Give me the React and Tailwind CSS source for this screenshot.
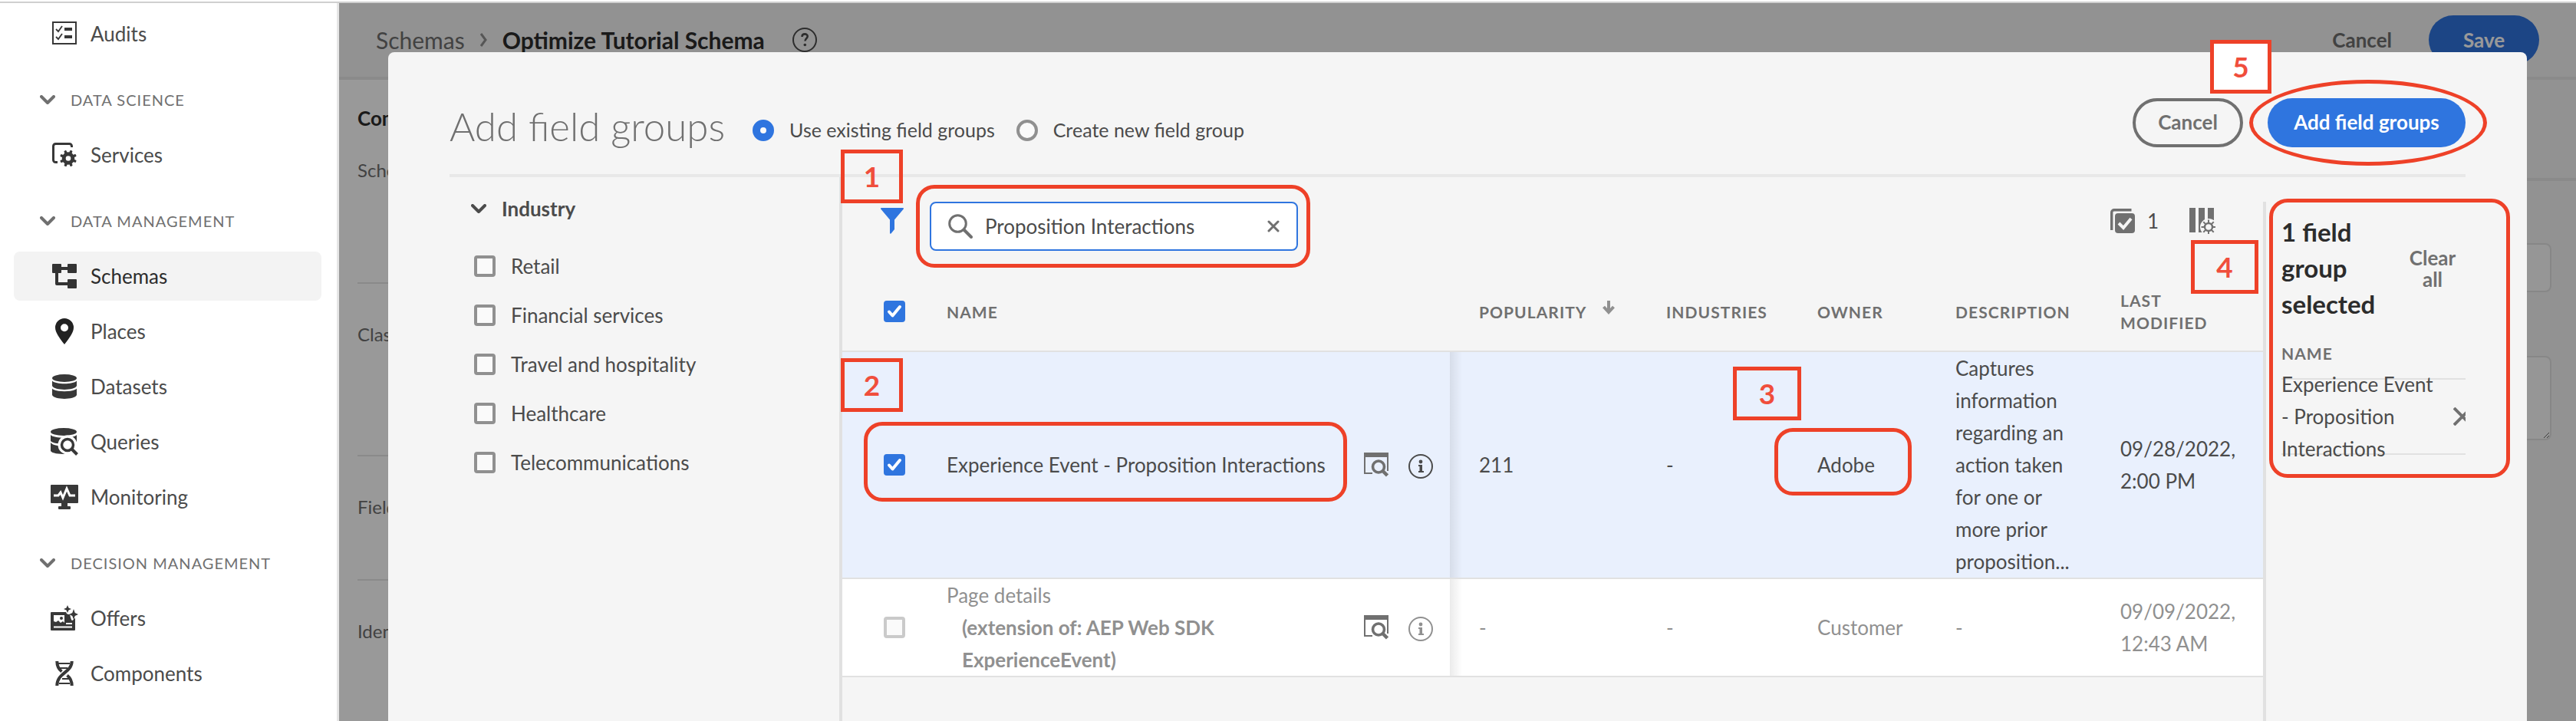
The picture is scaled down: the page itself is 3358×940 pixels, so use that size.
import React from "react";

const GEAR_TEETH = [0, 45, 90, 135, 180, 225, 270, 315];

function AuditsIcon() {
  return (
    <svg width="32" height="32" viewBox="0 0 32 32" fill="none" stroke="#383838" aria-hidden="true">
      <rect x="1" y="1" width="30" height="28" strokeWidth="2" />
      <path d="M5 10l3 3 5-7M5 20l3 3 5-7" strokeWidth="1.8" />
      <path d="M16 10h10M16 20h10" strokeWidth="4" />
    </svg>
  );
}

function ServicesIcon() {
  return (
    <svg width="32" height="32" viewBox="0 0 32 32" aria-hidden="true">
      <path
        d="M7 25.5H4.500A3 3 0 0 1 1.500 22.500V4.500A3 3 0 0 1 4.500 1.500H22.500A3 3 0 0 1 25.500 4.500V6"
        fill="none"
        stroke="#383838"
        strokeWidth="3"
      />
      <g fill="#383838">
        {GEAR_TEETH.map((angle) => (
          <rect key={angle} x="19.300" y="9.500" width="3.400" height="5" rx="1" transform={`rotate(${angle + 22} 21 20.500)`} />
        ))}
      </g>
      <circle cx="21" cy="20.500" r="5.800" fill="none" stroke="#383838" strokeWidth="5" />
    </svg>
  );
}

function SchemasIcon() {
  return (
    <svg width="32" height="32" viewBox="0 0 32 32" fill="#333333" aria-hidden="true">
      <rect width="12" height="12" rx="1" />
      <rect x="20" width="12" height="12" rx="1" />
      <rect x="20" y="20" width="12" height="12" rx="1" />
      <path d="M12 6h8M6 12v14h14" fill="none" stroke="#333333" strokeWidth="4" strokeLinejoin="round" />
    </svg>
  );
}

function PlacesIcon() {
  return (
    <svg width="32" height="34" viewBox="0 0 32 34" fill="#222222" aria-hidden="true">
      <path
        fillRule="evenodd"
        d="M16 0A12 12 0 0 0 4 12c0 6.500 5.500 13.500 12 22 6.500-8.500 12-15.500 12-22A12 12 0 0 0 16 0zm0 7.200a5 5 0 1 1 0 10 5 5 0 0 1 0-10z"
      />
    </svg>
  );
}

function DatasetsIcon() {
  return (
    <svg width="32" height="32" viewBox="0 0 32 32" fill="#383838" aria-hidden="true">
      <ellipse cx="16" cy="5" rx="16" ry="5" />
      <path d="M0 8.500C5 13.500 27 13.500 32 8.500V15C29 21.500 3 21.500 0 15z" />
      <path d="M0 18.500C4 23.500 28 23.500 32 18.500V27C29 33.500 3 33.500 0 27z" />
    </svg>
  );
}

function QueriesIcon() {
  return (
    <svg width="36" height="36" viewBox="0 0 36 36" fill="#383838" aria-hidden="true">
      <ellipse cx="17" cy="5" rx="17" ry="5" />
      <path d="M0 9C5 14 29 14 34 9V18C29 22 5 22 0 17z" />
      <path d="M0 19C3 23 12 24 20 23V34C10 34 2 33 0 30z" />
      <circle cx="22" cy="22" r="12.500" fill="#ffffff" />
      <path d="M24 24L36 36" stroke="#ffffff" strokeWidth="7" />
      <circle cx="22" cy="22" r="7.500" fill="#ffffff" stroke="#383838" strokeWidth="3.500" />
      <path d="M27.500 27.500L34.500 34.500" stroke="#383838" strokeWidth="4" />
    </svg>
  );
}

function MonitoringIcon() {
  return (
    <svg width="36" height="32" viewBox="0 0 36 32" fill="#383838" aria-hidden="true">
      <path d="M1 0h34a1 1 0 0 1 1 1v22a1 1 0 0 1-1 1H22v4h3a1 1 0 0 1 1 1v2a1 1 0 0 1-1 1H11a1 1 0 0 1-1-1v-2a1 1 0 0 1 1-1h3v-4H1a1 1 0 0 1-1-1V1a1 1 0 0 1 1-1z" />
      <path d="M4 14h6l3-4 3 7 5-12 4 9h7" fill="none" stroke="#ffffff" strokeWidth="3" />
    </svg>
  );
}

function OffersIcon() {
  return (
    <svg width="36" height="34" viewBox="0 0 36 34" fill="#383838" aria-hidden="true">
      <path d="M1 9h19c1 3 3 3 5 3 1 4 2 8 3 8 2 0 2-3 4-3v15a1 1 0 0 1-1 1H1a1 1 0 0 1-1-1V10a1 1 0 0 1 1-1z" />
      <path d="M4 13h14v10l-2-2-3 2-3-3-3 2-3-1z" fill="#ffffff" />
      <circle cx="14" cy="17" r="2" />
      <path d="M20 24h8M4 28.500h24" stroke="#ffffff" strokeWidth="2.200" />
      <path d="M22 0l1.500 3.500L27 5l-3.500 1.500L22 10l-1.500-3.500L17 5l3.500-1.500zM30 5l1.700 5L36 12l-4.300 2-1.700 5-1.700-5L24 12l4.300-2z" />
    </svg>
  );
}

function ComponentsIcon() {
  return (
    <svg width="32" height="32" viewBox="0 0 32 32" fill="none" stroke="#383838" aria-hidden="true">
      <path d="M25.700 0C25.700 15 6.300 15 6.300 32" strokeWidth="4" />
      <path d="M6.300 0C6.300 6 8 10 12.500 13.500M25.700 32C25.700 26 24 22 19.500 18.500" strokeWidth="4" />
      <path d="M8 3h15M9 9h11M13 23h10M9 29h14" strokeWidth="2" />
    </svg>
  );
}

function Chevron({ color }) {
  return (
    <svg width="20" height="12" viewBox="0 0 20 12" fill="none" stroke={color} strokeWidth="4" strokeLinecap="round" aria-hidden="true">
      <path d="M2 2l8 8 8-8" strokeLinejoin="round" />
    </svg>
  );
}

function FilterIcon() {
  return (
    <svg width="30" height="34" viewBox="0 0 30 34" fill="#2f75df" aria-hidden="true">
      <path d="M1 0h28a1 1 0 0 1 .800 1.600L18 15.500V28l-4.500 5.500a1 1 0 0 1-1.500-1V15.500L.200 1.600A1 1 0 0 1 1 0z" />
    </svg>
  );
}

function SearchIcon() {
  return (
    <svg width="32" height="32" viewBox="0 0 32 32" fill="none" stroke="#707070" strokeWidth="3" aria-hidden="true">
      <circle cx="12.500" cy="12.500" r="10.800" />
      <path d="M20.500 20.500L30 30" strokeWidth="4" strokeLinecap="round" />
    </svg>
  );
}

function PreviewIcon() {
  return (
    <svg width="32" height="32" viewBox="0 0 32 32" fill="none" stroke="#707070" aria-hidden="true">
      <path d="M0 3h32" strokeWidth="6" />
      <path d="M1 5v22h10M31 5v19" strokeWidth="2" />
      <circle cx="19" cy="18.500" r="7.500" strokeWidth="3.600" />
      <path d="M24.500 24l6 6" strokeWidth="4.500" />
    </svg>
  );
}

function InfoIcon({ color }) {
  return (
    <svg width="32" height="32" viewBox="0 0 32 32" fill={color} aria-hidden="true">
      <circle cx="16" cy="16" r="15" fill="none" stroke={color} strokeWidth="2" />
      <circle cx="16" cy="10" r="2.400" />
      <path d="M13 14h5v8h2v2h-7v-2h1.500v-6H13z" />
    </svg>
  );
}

function HelpIcon() {
  return (
    <svg width="32" height="32" viewBox="0 0 32 32" fill="none" stroke="#4b4b4b" aria-hidden="true">
      <circle cx="16" cy="16" r="15" strokeWidth="2" />
      <path d="M12.500 12c0-5 7.500-4.500 7.200-.500-.200 2.500-3.200 2.800-3.200 6" strokeWidth="2.600" />
      <circle cx="16.300" cy="22.500" r="1.800" fill="#4b4b4b" stroke="none" />
    </svg>
  );
}

function SelectedIcon() {
  return (
    <svg width="32" height="32" viewBox="0 0 32 32" aria-hidden="true">
      <path d="M1.700 28V5A3.300 3.300 0 0 1 5 1.700h22.500" fill="none" stroke="#707070" strokeWidth="3.400" />
      <rect x="6" y="6" width="26" height="26" rx="4" fill="#707070" />
      <path d="M11 19l6 6 10-12" fill="none" stroke="#f5f5f5" strokeWidth="4" />
    </svg>
  );
}

function ColumnsIcon() {
  return (
    <svg width="34" height="34" viewBox="0 0 34 34" fill="#707070" aria-hidden="true">
      <path d="M0 0h8v32H0zM12 0h8v32h-8zM24 0h8v16h-8z" />
      <circle cx="25" cy="25" r="11" fill="#f5f5f5" />
      {GEAR_TEETH.map((angle) => (
        <rect key={angle} x="24" y="15.500" width="2" height="4" transform={`rotate(${angle} 25 25)`} />
      ))}
      <circle cx="25" cy="25" r="5" fill="none" stroke="#707070" strokeWidth="2.400" />
    </svg>
  );
}

function Checkbox({ id, label, checked = false, muted = false }) {
  return (
    <span className="grid size-7 shrink-0">
      <input
        id={id}
        type="checkbox"
        aria-label={label}
        defaultChecked={checked}
        disabled={muted}
        className="peer col-start-1 row-start-1 size-7 appearance-none rounded border-4 border-[#909090] bg-[#fafafa] checked:border-[#2f75df] checked:bg-[#2f75df] disabled:border-[#cacaca]"
      />
      <svg
        viewBox="0 0 28 28"
        className="pointer-events-none col-start-1 row-start-1 hidden size-7 peer-checked:block"
        fill="none"
        stroke="#ffffff"
        strokeWidth="4"
        strokeLinecap="round"
        strokeLinejoin="round"
        aria-hidden="true"
      >
        <path d="M7 14.500l4.500 5L21 8" />
      </svg>
    </span>
  );
}

const NAV = [
  { items: [["Audits", AuditsIcon]] },
  { title: "DATA SCIENCE", items: [["Services", ServicesIcon]] },
  {
    title: "DATA MANAGEMENT",
    items: [
      ["Schemas", SchemasIcon],
      ["Places", PlacesIcon],
      ["Datasets", DatasetsIcon],
      ["Queries", QueriesIcon],
      ["Monitoring", MonitoringIcon],
    ],
  },
  {
    title: "DECISION MANAGEMENT",
    items: [
      ["Offers", OffersIcon],
      ["Components", ComponentsIcon],
    ],
  },
];

function Sidebar() {
  return (
    <nav aria-label="Main" className="flex w-[442px] shrink-0 flex-col gap-[22px] border-r-3 border-[#e6e6e6] bg-white pt-2 pr-5 pl-[18px]">
      {NAV.map((section) => (
        <section key={section.items[0][0]} className="flex flex-col gap-2">
          {section.title && (
            <button type="button" className="flex h-16 items-center gap-5 pl-[34px] text-[20px] tracking-wider text-[#707070]">
              <Chevron color="#707070" />
              {section.title}
            </button>
          )}
          {section.items.map(([label, Icon]) => (
            <a
              key={label}
              href={`#${label.toLowerCase()}`}
              className={
                label === "Schemas"
                  ? "flex h-16 items-center gap-4 rounded-lg bg-[#f3f3f3] pl-12 text-[26px] text-[#2c2c2c]"
                  : "flex h-16 items-center gap-4 rounded-lg pl-12 text-[26px] text-[#4b4b4b]"
              }
            >
              <span className="grid w-9 place-items-center">
                <Icon />
              </span>
              {label}
            </a>
          ))}
        </section>
      ))}
    </nav>
  );
}

function SchemaEditor() {
  return (
    <div className="flex h-full flex-col bg-[#f4f4f4]">
      <header className="flex h-[100px] shrink-0 items-start justify-between border-b-4 border-[#e6e6e6] pr-12 pl-12">
        <div className="flex h-[96px] items-center gap-5 text-[30px] text-[#6e6e6e]">
          <a href="#schemas">Schemas</a>
          <svg width="9" height="18" viewBox="0 0 9 18" fill="none" stroke="#909090" strokeWidth="3" aria-hidden="true">
            <path d="M1 1l6 8-6 8" />
          </svg>
          <h1 className="font-bold text-[#2c2c2c]">Optimize Tutorial Schema</h1>
          <span className="pl-4">
            <HelpIcon />
          </span>
        </div>
        <div className="flex items-center gap-12 pt-4 text-[26px] font-bold">
          <button type="button" className="text-[#6e6e6e]">
            Cancel
          </button>
          <button type="button" className="h-16 w-36 rounded-full bg-[#3074de] text-white">
            Save
          </button>
        </div>
      </header>
      <div className="flex grow">
        <aside className="w-16 shrink-0 overflow-hidden bg-white pl-6 text-[24px] whitespace-nowrap text-[#6e6e6e]">
          <h2 className="pt-8 text-[26px] leading-9 font-bold text-[#2c2c2c]">Composition</h2>
          <p className="mt-8 h-[166px] border-b-2 border-[#e6e6e6] leading-9">Schema</p>
          <p className="h-[225px] border-b-2 border-[#e6e6e6] pt-12 leading-9">Class</p>
          <p className="h-[162px] border-b-2 border-[#e6e6e6] pt-12 leading-9">Field groups</p>
          <p className="pt-12 leading-9">Identities</p>
        </aside>
        <div className="min-w-0 grow">
          <div className="h-[132px] border-b-4 border-[#e6e6e6]" />
          <form className="flex flex-col items-end gap-[83px] pt-[81px] pr-8">
            <input aria-label="Display name" className="h-16 w-[560px] rounded-lg border-2 border-[#e1e1e1] bg-[#fafafa]" />
            <textarea aria-label="Description" className="h-[110px] w-[560px] rounded-lg border-2 border-[#e1e1e1] bg-[#fafafa]" />
          </form>
        </div>
      </div>
    </div>
  );
}

function Badge({ children, className }) {
  return (
    <span className={`pointer-events-none absolute z-10 grid h-[70px] place-items-center border-5 border-[#ee4128] text-[37px] font-bold text-[#f04e3c] ${className}`}>
      {children}
    </span>
  );
}

function Ring({ className }) {
  return <span className={`pointer-events-none absolute z-10 border-5 border-[#ee4128] ${className}`} />;
}

const INDUSTRIES = ["Retail", "Financial services", "Travel and hospitality", "Healthcare", "Telecommunications"];

function IndustryFilter() {
  return (
    <aside className="flex w-[508px] shrink-0 flex-col pt-4 pl-7 text-[26px] text-[#4b4b4b]">
      <button type="button" className="flex h-[50px] items-center gap-5 font-bold">
        <Chevron color="#4b4b4b" />
        Industry
      </button>
      <ul className="flex flex-col gap-7 pt-8 pl-1">
        {INDUSTRIES.map((name) => (
          <li key={name} className="flex h-9 items-center gap-5">
            <Checkbox id={`industry-${name}`} />
            <label htmlFor={`industry-${name}`}>{name}</label>
          </li>
        ))}
      </ul>
    </aside>
  );
}

const ROWS = [
  {
    name: "Experience Event - Proposition Interactions",
    selected: true,
    popularity: "211",
    industries: "-",
    owner: "Adobe",
    description: "Captures information regarding an action taken for one or more prior proposition...",
    modified: "09/28/2022, 2:00 PM",
  },
  {
    name: "Page details",
    extension: "(extension of: AEP Web SDK ExperienceEvent)",
    popularity: "-",
    industries: "-",
    owner: "Customer",
    description: "-",
    modified: "09/09/2022, 12:43 AM",
  },
];

function FieldGroupTable() {
  return (
    <table className="w-full table-fixed text-left text-[26px] leading-[42px]">
      <colgroup>
        <col className="w-[136px]" />
        <col />
        <col className="w-[112px]" />
        <col className="w-[244px]" />
        <col className="w-[197px]" />
        <col className="w-[180px]" />
        <col className="w-[215px]" />
        <col className="w-[224px]" />
      </colgroup>
      <thead>
        <tr className="h-[131px] border-b-2 border-[#e1e1e1] text-[21px] leading-[29px] tracking-wider text-[#707070]">
          <th className="pt-8 pb-1 pl-[54px]">
            <Checkbox label="Select all" checked />
          </th>
          <th colSpan={2} className="pt-8 pb-1">
            NAME
          </th>
          <th className="pt-8 pb-1 pl-[38px]">
            <span className="flex items-center gap-5">
              POPULARITY
              <svg width="16" height="28" viewBox="0 0 16 28" fill="none" stroke="#909090" strokeWidth="4" aria-hidden="true">
                <path d="M8 0v15M1.500 8L8 15l6.500-7" />
              </svg>
            </span>
          </th>
          <th className="pt-8 pb-1 pl-[38px]">INDUSTRIES</th>
          <th className="pt-8 pb-1 pl-[38px]">OWNER</th>
          <th className="pt-8 pb-1 pl-[38px]">DESCRIPTION</th>
          <th className="pt-8 pr-20 pb-1 pl-[38px]">LAST MODIFIED</th>
        </tr>
      </thead>
      <tbody>
        {ROWS.map((row) => (
          <tr
            key={row.name}
            className={
              row.selected
                ? "border-b-2 border-[#e1e1e1] bg-[#e9f0fd] text-[#4b4b4b]"
                : "border-b-2 border-[#e1e1e1] bg-white text-[#909090]"
            }
          >
            <td className="relative pl-[54px]">
              <Checkbox label={`Select ${row.name}`} checked={row.selected} muted={!row.selected} />
              {row.selected && <Badge className="top-2 left-[-2px] w-[81px]">2</Badge>}
            </td>
            <td>
              {row.selected ? (
                <span className="relative whitespace-nowrap">
                  {row.name}
                  <Ring className="-top-10 -right-7 -bottom-8 -left-[108px] rounded-3xl" />
                </span>
              ) : (
                <>
                  {row.name}
                  <strong className="block pr-32 pl-5">{row.extension}</strong>
                </>
              )}
            </td>
            <td className="relative">
              <span className="flex items-center gap-[26px]">
                <button type="button" aria-label={`Preview ${row.name}`}>
                  <PreviewIcon />
                </button>
                <button type="button" aria-label={`About ${row.name}`} className="pt-1">
                  <InfoIcon color={row.selected ? "#4b4b4b" : "#909090"} />
                </button>
              </span>
              <span className="absolute inset-y-0 left-full w-4 bg-linear-to-r from-black/8 to-transparent" />
            </td>
            <td className="pl-[38px]">{row.popularity}</td>
            <td className="relative pl-[38px]">
              {row.industries}
              {row.selected && <Badge className="top-[19px] right-[-17px] w-[89px]">3</Badge>}
            </td>
            <td className="pl-[38px]">
              {row.selected ? (
                <span className="relative">
                  {row.owner}
                  <Ring className="-top-8 -right-12 -bottom-6 -left-14 rounded-3xl" />
                </span>
              ) : (
                row.owner
              )}
            </td>
            <td className="pr-2 pl-[38px]">{row.description}</td>
            <td className="pr-8 pl-[38px]">{row.modified}</td>
          </tr>
        ))}
      </tbody>
    </table>
  );
}

function SelectionPanel() {
  return (
    <aside className="mt-8 w-[264px] shrink-0 border-l-4 border-[#e1e1e1] pl-5">
      <div className="relative">
        <Ring className="-top-1 -right-[58px] -bottom-[30px] -left-4 rounded-3xl" />
        <div className="flex items-center justify-between pt-4">
          <h3 className="w-[130px] text-[33px] leading-[47px] font-bold text-[#2c2c2c]">1 field group selected</h3>
          <button type="button" className="w-[86px] text-center text-[26px] leading-7 font-bold text-[#707070]">
            Clear all
          </button>
        </div>
        <h4 className="border-b-2 border-[#e1e1e1] pt-[26px] pb-[18px] text-[21px] leading-[29px] font-bold tracking-wider text-[#707070]">NAME</h4>
        <div className="flex h-[98px] items-center justify-between border-b-2 border-[#e1e1e1] text-[26px] leading-[42px] text-[#4b4b4b]">
          <p className="w-[210px] shrink-0">Experience Event - Proposition Interactions</p>
          <button type="button" aria-label="Remove Experience Event - Proposition Interactions" className="w-4 shrink-0 overflow-hidden">
            <svg width="16" height="24" viewBox="0 0 16 24" fill="none" stroke="#707070" strokeWidth="4" aria-hidden="true">
              <path d="M1 1l22 22M23 1L1 23" />
            </svg>
          </button>
        </div>
      </div>
    </aside>
  );
}

function FieldGroupDialog() {
  return (
    <div role="dialog" aria-label="Add field groups" className="relative flex grow flex-col rounded-t-lg bg-[#f5f5f5] px-20 text-[26px] text-[#4b4b4b]">
      <header className="flex h-[163px] shrink-0 items-center justify-between border-b-4 border-[#e8e8e8] pt-11">
        <div className="flex items-center text-[25px]">
          <h2 className="mb-2 text-[51px] font-light text-[#707070]">Add field groups</h2>
          <label className="ml-9 flex items-center gap-5">
            <input type="radio" name="source" defaultChecked className="size-7 appearance-none rounded-full border-4 border-[#909090] bg-[#fafafa] checked:border-10 checked:border-[#2f75df]" />
            Use existing field groups
          </label>
          <label className="ml-7 flex items-center gap-5">
            <input type="radio" name="source" className="size-7 appearance-none rounded-full border-4 border-[#909090] bg-[#fafafa] checked:border-10 checked:border-[#2f75df]" />
            Create new field group
          </label>
        </div>
        <div className="mb-5 flex gap-8 font-bold">
          <button type="button" className="h-16 w-36 rounded-full border-4 border-[#707070] text-[#707070]">
            Cancel
          </button>
          <div className="relative">
            <button type="button" className="h-16 w-[258px] rounded-full bg-[#2f75df] text-white">
              Add field groups
            </button>
            <Ring className="-top-6 -right-7 -bottom-6 -left-6 rounded-[50%]" />
            <Badge className="right-[253px] bottom-[70px] w-20 bg-white">5</Badge>
          </div>
        </div>
      </header>
      <div className="flex grow">
        <IndustryFilter />
        <section className="relative min-w-0 grow border-l-4 border-[#e1e1e1] pt-8">
          <Badge className="-top-9 -left-[2px] w-[81px]">1</Badge>
          <div className="flex items-start justify-between pr-[62px] pl-[50px]">
            <div className="flex items-start gap-[34px]">
              <button type="button" aria-label="Toggle filters" className="pt-2">
                <FilterIcon />
              </button>
              <div className="relative flex h-16 w-[480px] items-center rounded-lg border-2 border-[#2f75df] bg-white px-[22px]">
                <SearchIcon />
                <input aria-label="Search field groups" defaultValue="Proposition Interactions" className="ml-4 min-w-0 grow bg-transparent outline-none" />
                <button type="button" aria-label="Clear search">
                  <svg width="16" height="16" viewBox="0 0 16 16" fill="none" stroke="#707070" strokeWidth="3" strokeLinecap="round" aria-hidden="true">
                    <path d="M2 2l12 12M14 2L2 14" />
                  </svg>
                </button>
                <Ring className="-top-6 -right-[18px] -bottom-6 -left-5 rounded-3xl" />
              </div>
            </div>
            <div className="relative flex items-center gap-4 pt-2 leading-8">
              <SelectedIcon />
              1
              <button type="button" aria-label="Choose columns" className="ml-6">
                <ColumnsIcon />
              </button>
              <Badge className="top-[50px] -right-14 w-[88px]">4</Badge>
            </div>
          </div>
          <FieldGroupTable />
        </section>
        <SelectionPanel />
      </div>
    </div>
  );
}

export default function App() {
  return (
    <div className="flex min-h-screen flex-col bg-white font-['Lato','Open_Sans',sans-serif]">
      <div className="h-1 shrink-0 border-b-2 border-[#d0d0d0]" />
      <div className="flex grow">
        <Sidebar />
        <main className="relative grid min-w-0 grow overflow-hidden">
          <div className="col-start-1 row-start-1">
            <SchemaEditor />
          </div>
          <div className="relative col-start-1 row-start-1 flex flex-col bg-black/40 px-16 pt-16">
            <FieldGroupDialog />
          </div>
        </main>
      </div>
    </div>
  );
}
